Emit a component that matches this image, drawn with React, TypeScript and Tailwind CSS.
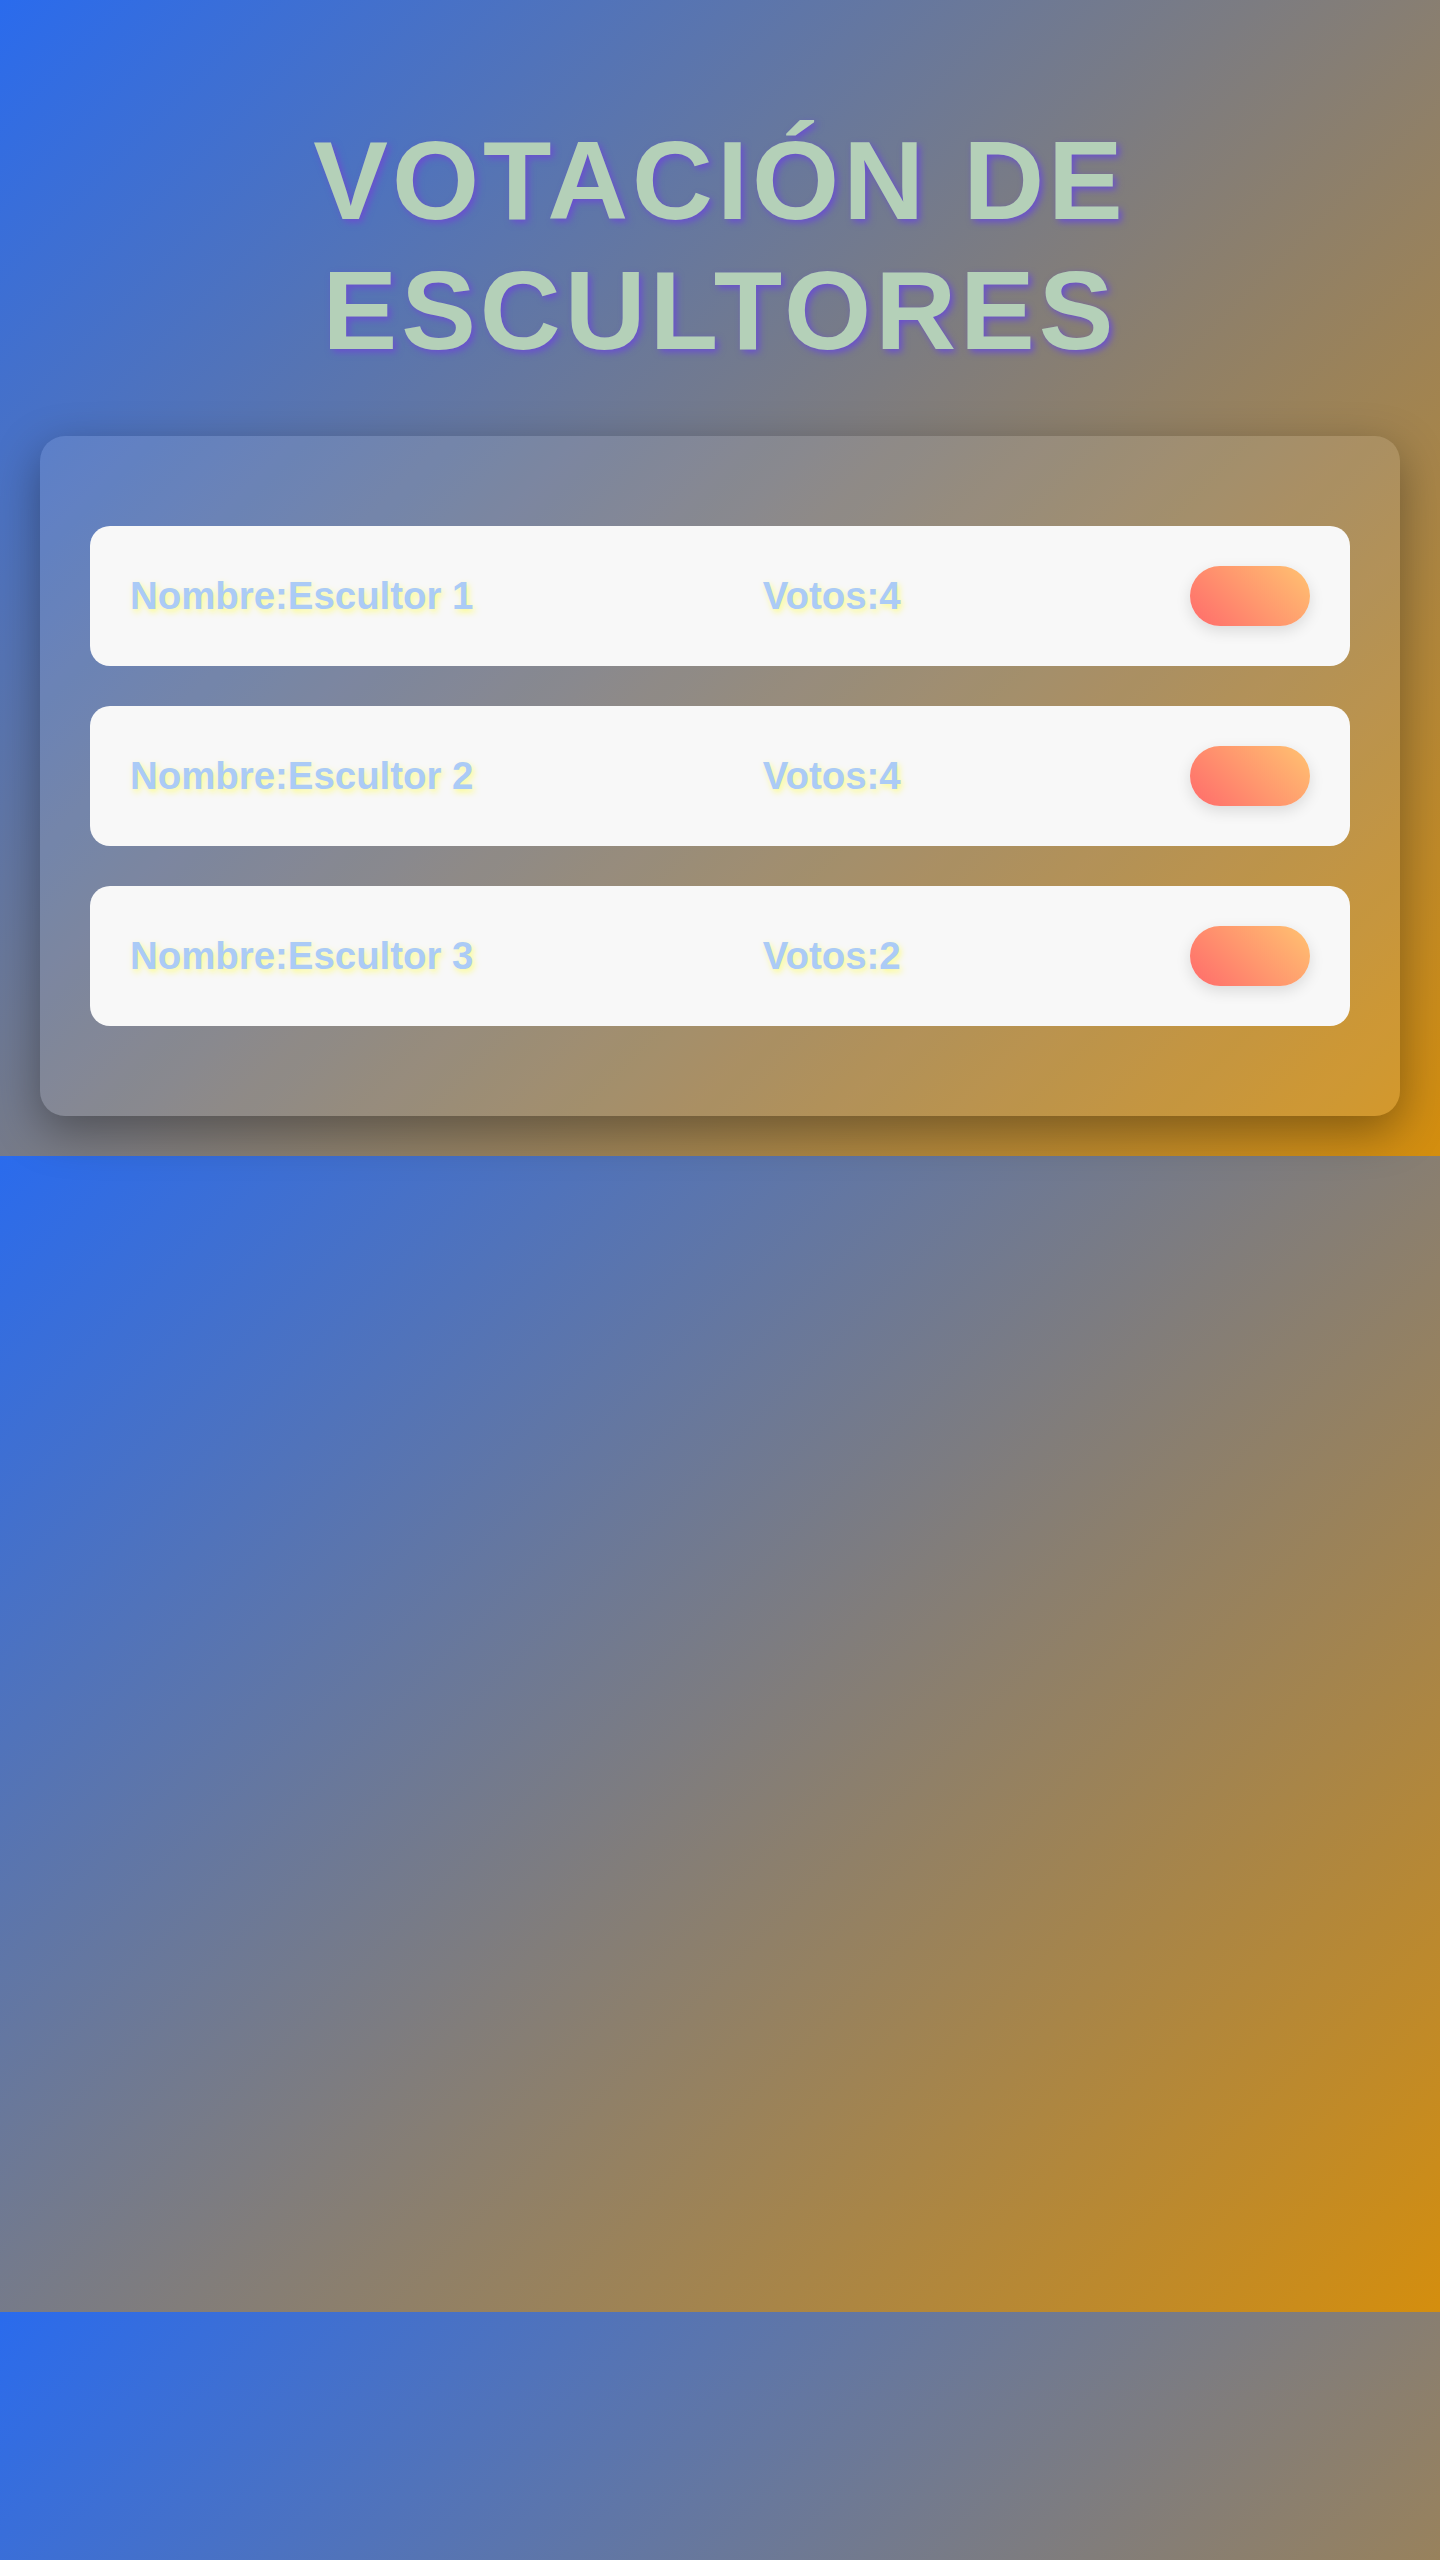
import React from "react";

const items = [
  { name: "Escultor 1", votes: 4 },
  { name: "Escultor 2", votes: 4 },
  { name: "Escultor 3", votes: 2 },
];

export default function App() {
  return (
    <div className="min-h-[2560px] bg-[linear-gradient(135deg,#2a6bed,#d48e0e)] bg-[length:100%_1156px] bg-repeat font-['Liberation_Sans',Arial,sans-serif]">
      <div className="px-10 pt-[116px] pb-10">
        <h1 className="text-center text-[112px] leading-[130px] font-bold tracking-[4px] text-[#b4d0b8] [text-shadow:3px_3px_7px_#6a4fd0]">
          VOTACIÓN DE ESCULTORES
        </h1>
        <div className="mt-[60px] flex flex-col gap-10 rounded-[25px] bg-white/10 px-[50px] py-[90px] shadow-[0_15px_45px_rgba(0,0,0,0.35)]">
          {items.map((it) => (
            <div
              key={it.name}
              className="flex h-[140px] items-center justify-between rounded-[20px] bg-[#f8f8f8] px-10"
            >
              <span className="text-[38.4px] font-bold text-[#abcbf6] [text-shadow:2px_3px_6px_rgba(255,255,60,0.6)]">
                Nombre:{it.name}
              </span>
              <span className="text-[38.4px] font-bold text-[#abcbf6] [text-shadow:2px_3px_6px_rgba(255,255,60,0.6)]">
                Votos:{it.votes}
              </span>
              <button className="h-[60px] w-[120px] rounded-full bg-[linear-gradient(45deg,#ff6b6b,#ffc371)] shadow-[0_5px_15px_rgba(0,0,0,0.12)]" />
            </div>
          ))}
        </div>
      </div>
    </div>
  );
}
